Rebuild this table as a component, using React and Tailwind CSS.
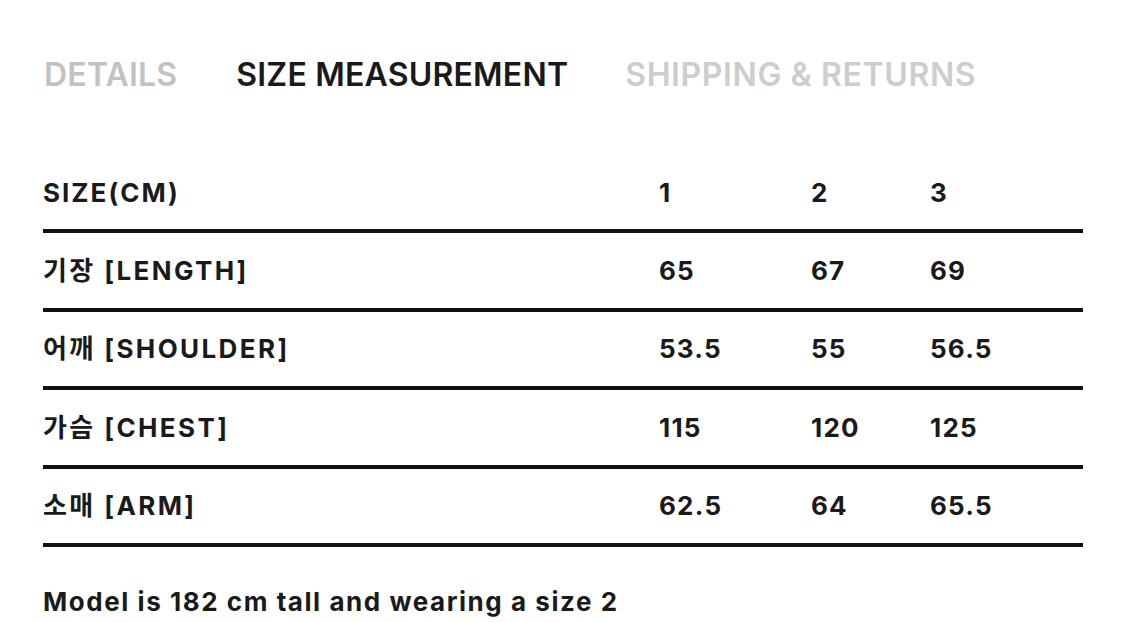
export default function App() {
  const rows = [
    ["기장 [LENGTH]", "65", "67", "69"],
    ["어깨 [SHOULDER]", "53.5", "55", "56.5"],
    ["가슴 [CHEST]", "115", "120", "125"],
    ["소매 [ARM]", "62.5", "64", "65.5"],
  ];
  const font = { fontFamily: 'Inter, "Noto Sans CJK KR", sans-serif' };
  return (
    <div className="w-[1125px] h-[622px] bg-white overflow-hidden text-[#1a1a1a]" style={font}>
      <div className="flex items-center h-[44px] mt-[53px] pl-[44px] text-[32px] font-semibold tracking-[0.2px]">
        <span className="text-[#c2c2c2]">DETAILS</span>
        <span className="ml-[59px] text-[#1a1a1a]">SIZE MEASUREMENT</span>
        <span className="ml-[57px] text-[#cdcdcd] tracking-[0.6px]">SHIPPING &amp; RETURNS</span>
      </div>
      <div className="mt-[59px] ml-[43px] w-[1040px] text-[26px] font-bold tracking-[1.2px]">
        <div className="grid grid-cols-[616px_152px_119px_1fr] items-center h-[77px] border-b-4 border-[#111]">
          <span className="tracking-[2px]">SIZE(CM)</span>
          <span>1</span>
          <span>2</span>
          <span>3</span>
        </div>
        {rows.map((r) => (
          <div key={r[0]} className="grid grid-cols-[616px_152px_119px_1fr] items-center h-[78.5px] border-b-4 border-[#111]">
            <span className="tracking-[2.4px]">{r[0]}</span>
            <span>{r[1]}</span>
            <span>{r[2]}</span>
            <span>{r[3]}</span>
          </div>
        ))}
        <div className="mt-[35px] tracking-[1.55px]">Model is 182 cm tall and wearing a size 2</div>
      </div>
    </div>
  );
}
